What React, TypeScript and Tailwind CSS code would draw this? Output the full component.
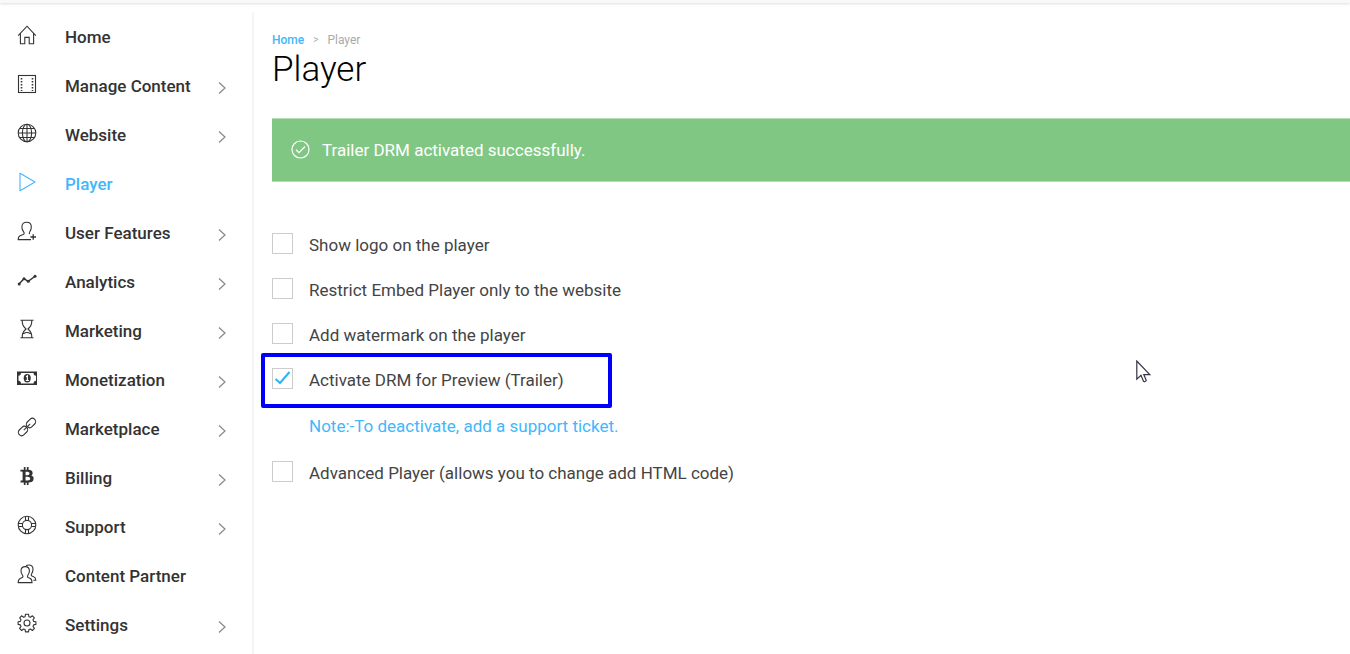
import type { ReactNode } from "react";
import { FaBtc } from "react-icons/fa";

type IconName =
  | "home"
  | "film"
  | "globe"
  | "play"
  | "userPlus"
  | "chart"
  | "hourglass"
  | "money"
  | "link"
  | "bitcoin"
  | "support"
  | "users"
  | "gear";

const PATHS: Record<Exclude<IconName, "bitcoin">, ReactNode> = {
  home: <path d="M1.2 10.6 10 1.2l8.8 9.4M3.4 8.6V18.8h4.4v-6.4h4.4v6.4h4.4V8.6" />,
  film: (
    <>
      <rect x="1.5" y="1.5" width="17" height="17" />
      <path d="M4.5 4v13M15.5 4v13" strokeWidth="1.6" strokeDasharray="1.5 1.5" />
    </>
  ),
  globe: (
    <>
      <circle cx="10" cy="10" r="8.8" />
      <ellipse cx="10" cy="10" rx="4.6" ry="8.8" />
      <path d="M10 1.2v17.6M1.2 10h17.6M2.6 5.5h14.8M2.6 14.5h14.8" />
    </>
  ),
  play: <path d="M3 1.3v17.4L18 10z" strokeLinejoin="round" />,
  userPlus: (
    <>
      <path d="M14 18.6H1.2c0-2.8.6-3.600 2.300-4.200l2.800-1c1.200-.5 1-1.700.2-2.700C5.300 9.100 4.900 7.800 4.900 5.900c0-3 1.900-4.700 4.700-4.700s4.700 1.700 4.700 4.700c0 1.900-.4 3.200-1.500 4.800-.6.900-.7 1.800-.1 2.400" />
      <path d="M16.2 13.200v5.600M13.400 16h5.600" strokeWidth="1.300" />
    </>
  ),
  chart: (
    <>
      <path d="m2 14 5-5.300 4.200 2.600L18 6.300" strokeWidth="1.400" />
      <g fill="currentColor" stroke="none">
        <circle cx="2.200" cy="13.900" r="1.500" />
        <circle cx="7" cy="8.700" r="1.500" />
        <circle cx="11.300" cy="11.200" r="1.500" />
        <circle cx="18" cy="6.200" r="1.500" />
      </g>
    </>
  ),
  hourglass: (
    <path d="M3.500 1.300h13M3.500 18.700h13M5.200 1.300c0 4.200.6 5.600 3.800 8.700-3.200 3.100-3.800 4.500-3.800 8.700M14.800 1.300c0 4.200-.6 5.600-3.800 8.700 3.200 3.100 3.800 4.500 3.800 8.700M6.500 14.800c2.200-1.700 4.800-1.700 7 0" />
  ),
  money: (
    <>
      <path
        d="M0 3.500h20.500v13.500H0zM4 5C4 6.600 3 7.800 1.500 7.800v4.900c1.500 0 2.500 1.200 2.500 2.800h12.500c0-1.600 1-2.800 2.500-2.800V7.800c-1.500 0-2.500-1.200-2.500-2.800z"
        fill="currentColor"
        fillRule="evenodd"
        stroke="none"
      />
      <ellipse cx="10.200" cy="10.200" rx="3.500" ry="4.200" fill="currentColor" stroke="none" />
      <path d="m9 8.800 1.400-.9v4.500M8.700 12.500h3.200" stroke="white" strokeWidth="1.200" />
    </>
  ),
  link: (
    <>
      <rect x="-5.200" y="-3.300" width="10.400" height="6.600" rx="3.300" transform="translate(14 6) rotate(-45)" />
      <rect x="-5.200" y="-3.300" width="10.400" height="6.600" rx="3.300" transform="translate(6 14) rotate(-45)" />
      <path d="m6.800 13.200 6.400-6.400" />
    </>
  ),
  support: (
    <>
      <circle cx="10" cy="10" r="8.800" />
      <circle cx="10" cy="10" r="4.600" />
      <path d="M8.500 1.400v4.300M11.500 1.400v4.300M8.500 14.300v4.300M11.500 14.300v4.300M1.400 8.500h4.300M1.400 11.500h4.300M14.300 8.500h4.300M14.300 11.500h4.300" />
    </>
  ),
  users: (
    <>
      <path d="M15 18.600H1.200c0-2.800.5-3.600 2-4.200l2-.8c1.100-.5.9-1.600.2-2.600C4.400 9.600 4 8.600 4 6.900c0-2.800 1.700-4.300 4.200-4.300s4.200 1.500 4.200 4.300c0 1.700-.4 2.700-1.400 4.100-.7 1-.9 2.100.2 2.600l2 .8c1.500.6 1.800 1.400 1.800 4.200z" />
      <path d="M9 1.700c.8-.5 1.800-.7 2.800-.7C14.400 1 16 2.600 16 5.300c0 1.700-.3 2.900-1.200 4.200-.7 1-.9 2.100.2 2.600l1.700.7c1.600.6 2.100 1.400 2.100 3.400h-2.500" />
    </>
  ),
  gear: (
    <>
      <path
        d="m8.500 1.200h3l.4 2.500 1.500.6 2-1.500 2 2-1.400 2.100.6 1.500 2.300.4v2.600l-2.300.5-.6 1.500 1.400 2-2 2.100-2-1.500-1.500.6-.4 2.300h-3l-.4-2.300-1.500-.6-2 1.500-2-2.100 1.400-2-.6-1.500-2.300-.5V8.800l2.300-.4.6-1.500-1.400-2.100 2-2 2 1.500 1.500-.6z"
        strokeLinejoin="round"
      />
      <circle cx="10" cy="10" r="3" />
    </>
  ),
};

function Icon({ name }: { name: IconName }) {
  if (name === "bitcoin") {
    return <FaBtc className="h-[18px] w-5" />;
  }
  return (
    <svg
      viewBox="0 0 20 20"
      className="size-5"
      fill="none"
      stroke="currentColor"
      strokeWidth="1.1"
      aria-hidden="true"
    >
      {PATHS[name]}
    </svg>
  );
}

const NAV: { label: string; icon: IconName; sub?: boolean; active?: boolean }[] = [
  { label: "Home", icon: "home" },
  { label: "Manage Content", icon: "film", sub: true },
  { label: "Website", icon: "globe", sub: true },
  { label: "Player", icon: "play", active: true },
  { label: "User Features", icon: "userPlus", sub: true },
  { label: "Analytics", icon: "chart", sub: true },
  { label: "Marketing", icon: "hourglass", sub: true },
  { label: "Monetization", icon: "money", sub: true },
  { label: "Marketplace", icon: "link", sub: true },
  { label: "Billing", icon: "bitcoin", sub: true },
  { label: "Support", icon: "support", sub: true },
  { label: "Content Partner", icon: "users" },
  { label: "Settings", icon: "gear", sub: true },
];

function Sidebar() {
  return (
    <aside className="w-[254px] shrink-0 border-r-2 border-[#f5f5f5]">
      <nav>
        {NAV.map((n) => (
          <a
            key={n.label}
            href="#"
            className={`flex h-[49px] items-center pr-[26px] pl-[17px] text-[17px] font-medium ${
              n.active ? "text-[#42b7fb]" : "text-[#333]"
            }`}
          >
            <span className="pb-1">
              <Icon name={n.icon} />
            </span>
            <span className="ml-7 flex-1 whitespace-nowrap">{n.label}</span>
            {n.sub && (
              <svg viewBox="0 0 8 12" className="mt-1 h-3 w-2" fill="none" stroke="#888" aria-hidden="true">
                <path d="m1 .5 6 5.500-6 5.500" strokeWidth="1.200" />
              </svg>
            )}
          </a>
        ))}
      </nav>
    </aside>
  );
}

function Option({
  label,
  checked,
  highlight,
}: {
  label: string;
  checked?: boolean;
  highlight?: boolean;
}) {
  return (
    <div className="relative flex h-[45px] items-center">
      <label className="flex items-center gap-4">
        <span className="grid pb-[2px]">
          <input
            type="checkbox"
            defaultChecked={checked}
            className="peer col-start-1 row-start-1 size-[21px] appearance-none border border-[#ccc] bg-white"
          />
          <svg
            viewBox="0 0 21 21"
            className="pointer-events-none invisible col-start-1 row-start-1 size-[21px] peer-checked:visible"
            fill="none"
            stroke="#29b6f6"
            strokeWidth="2"
            aria-hidden="true"
          >
            <path d="m3.500 11 4.500 4L17.500 4" />
          </svg>
        </span>
        {label}
      </label>
      {/* callout frame around the row */}
      {highlight && (
        <div className="pointer-events-none absolute -top-1 -left-[11px] h-[55px] w-[351px] rounded-[2px] border-4 border-[#0000fa]" />
      )}
    </div>
  );
}

function Cursor() {
  return (
    <svg viewBox="0 0 16 24" className="pointer-events-none absolute top-[360px] left-[1136px] h-6 w-4" aria-hidden="true">
      <path d="M.8 1v18.200l4.200-4 2.600 6.200c.3.800 2.900-.3 2.600-1.200L7.800 14.600h6z" fill="white" stroke="#334" strokeWidth="1.200" />
    </svg>
  );
}

export default function App() {
  return (
    <div className="relative flex min-h-screen flex-col overflow-x-hidden bg-white font-['Roboto',sans-serif] text-[17px] leading-6 text-[#444]">
      <header className="h-[3px] bg-[#f8f8f8] shadow-[0_1px_3px_#ddd]" />
      <div className="flex flex-1 pt-[9px]">
        <Sidebar />
        <main className="min-w-0 flex-1 pt-5 pl-[18px]">
          <div className="flex gap-[9px] text-[12px] leading-4 text-[#aaa]">
            <a href="#" className="font-medium text-[#42b7fb]">
              Home
            </a>
            <span className="text-[10px]">&gt;</span>
            <span>Player</span>
          </div>
          <h1 className="text-[35px] leading-[44px] font-light text-black">Player</h1>

          <div
            role="status"
            className="mt-[26px] flex h-16 items-center gap-3 border-y border-[#b5deb7] bg-[#81c784] pl-[19px] text-white"
          >
            <svg viewBox="0 0 19 19" className="mb-[2px] size-[19px]" fill="none" stroke="white" strokeWidth="1.2" aria-hidden="true">
              <circle cx="9.500" cy="9.500" r="8.500" />
              <path d="m5 9.800 3 2.900 6-6.200" />
            </svg>
            Trailer DRM activated successfully.
          </div>

          <form className="mt-10">
            <Option label="Show logo on the player" />
            <Option label="Restrict Embed Player only to the website" />
            <Option label="Add watermark on the player" />
            <Option label="Activate DRM for Preview (Trailer)" checked highlight />
            <p className="flex h-12 items-center pl-[37px] text-[#42b7fb]">
              Note:-To deactivate, add a support ticket.
            </p>
            <Option label="Advanced Player (allows you to change add HTML code)" />
          </form>
        </main>
      </div>
      <Cursor />
    </div>
  );
}
